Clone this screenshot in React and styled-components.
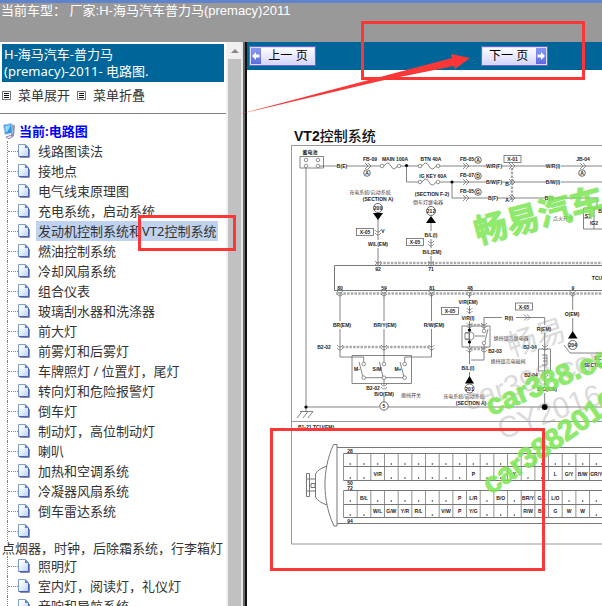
import React from 'react'
import styled, { createGlobalStyle, css } from 'styled-components'

const menuItems = [
  '线路图读法',
  '接地点',
  '电气线束原理图',
  '充电系统，启动系统',
  '发动机控制系统和VT2控制系统',
  '燃油控制系统',
  '冷却风扇系统',
  '组合仪表',
  '玻璃刮水器和洗涤器',
  '前大灯',
  '前雾灯和后雾灯',
  '车牌照灯 / 位置灯，尾灯',
  '转向灯和危险报警灯',
  '倒车灯',
  '制动灯，高位制动灯',
  '喇叭',
  '加热和空调系统',
  '冷凝器风扇系统',
  '倒车雷达系统',
  '点烟器，时钟，后除霜系统，行李箱灯',
  '照明灯',
  '室内灯，阅读灯，礼仪灯',
  '音响和导航系统',
]

const ACTIVE = 4
const LONG_LABEL = 16

const PageIcon = () => (
  <svg width='12' height='14' viewBox='0 0 12 14' aria-hidden='true'>
    <defs>
      <linearGradient id='sheet' x1='0' y1='0' x2='1' y2='1'>
        <stop offset='0.2' stopColor='#fff' />
        <stop offset='1' stopColor='#b4d2f4' />
      </linearGradient>
    </defs>
    <path d='M2 13.5H11.5V5' fill='none' stroke='#8c8fa8' />
    <path d='M.5 .5H7.5L10.5 3.5V12.5H.5Z' fill='url(#sheet)' stroke='#7e9cd6' />
    <path d='M10.5 4V12.5H1' fill='none' stroke='#4a5fae' />
    <path d='M7 .5V4H10.5Z' fill='#5b7fd0' />
  </svg>
)

const ComputerIcon = () => (
  <svg width='13' height='17' viewBox='0 0 13 17' aria-hidden='true'>
    <path d='M8 1L12 2.5L11 13L6 16L2 14L8 12Z' fill='#8f92b4' />
    <path d='M0.5 2L8.5 .5L9.5 10L2 11.5Z' fill='#2f97ea' stroke='#b9c6e4' />
    <path d='M2 3L7.5 2L5 8L2.8 9.5Z' fill='#8fdcff' />
    <path d='M3 14L7 12.5L10 13.5L6 15.8Z' fill='#dfe0ee' stroke='#7d7fa6' strokeWidth='.6' />
  </svg>
)

const ToggleIcon = () => (
  <svg width='9' height='9' viewBox='0 0 9 9' aria-hidden='true'>
    <rect x='.5' y='.5' width='8' height='8' fill='#fff' stroke='#777' />
    <path d='M2 2.5H7M2 4.5H7M2 6.5H7' stroke='#111' />
  </svg>
)

const ArrowIcon = ({ flip }) => (
  <svg width='8' height='8' viewBox='0 0 8 8' aria-hidden='true'>
    <path
      d='M0 4L4 0V2.5H7.5V5.5H4V8Z'
      fill='#fff'
      transform={flip ? 'matrix(-1 0 0 1 8 0)' : undefined}
    />
  </svg>
)

// text, x, y (centre of the text)
const wireLabels = [
  ['蓄电池', 310, 152], ['B(E)', 342, 166], ['FB-09', 370, 159], ['MAIN 100A', 395, 159],
  ['BTN 40A', 431, 159], ['IG KEY 60A', 433, 176], ['(SECTION F-2)', 432, 194],
  ['(SECTION A)', 378, 199], ['V', 383, 231], ['W/L(EM)', 378, 244], ['B/L(I)', 431, 235],
  ['B/L(EM)', 432, 252], ['FB-05', 467, 159], ['FB-07', 467, 175], ['FB-05', 467, 191],
  ['W/R(F)', 494, 166], ['B/W(F)', 494, 182], ['B(F)', 493, 198], ['B', 507, 184],
  ['A', 507, 200], ['W/R(I)', 553, 166], ['B/W(I)', 553, 182], ['B(I)', 549, 198],
  ['JB-04', 583, 159], ['ST', 588, 216], ['IG2', 594, 223], ['B', 600, 211],
  ['92', 378, 269], ['71', 431, 269], ['80', 340, 288], ['59', 384, 288], ['81', 432, 288],
  ['48', 470, 288], ['9', 573, 288], ['TCU', 597, 278], ['BR(EM)', 342, 325],
  ['BR/Y(EM)', 385, 325], ['R/W(EM)', 434, 325], ['B2-02', 324, 347], ['M-', 357, 369],
  ['S/M', 377, 369], ['M+', 398, 369], ['B2-02', 373, 388], ['B/O(EM)', 384, 394],
  ['B1-21 TCU(EM)', 316, 427], ['V/R(EM)', 468, 302], ['V/R(I)', 468, 318], ['R(I)', 509, 318],
  ['R(EM)', 544, 329], ['B2-03', 495, 351], ['B/L(I)', 468, 368], ['(SECTION A)', 471, 403],
  ['B2-04', 530, 347], ['B2-04', 531, 375], ['B/O(EM)', 547, 389], ['O(EM)', 572, 314],
  ['EC', 598, 358], ['(SECTION', 594, 365],
]

const cnLabels = [
  ['充电系统/启动系统', 370, 192], ['倒车灯继电器', 428, 202], ['点火开关', 563, 218],
  ['换挡开关', 411, 395], ['换挡锁芯继电器', 511, 338], ['换挡锁芯电磁阀', 508, 361],
  ['充电系统/启动系统', 464, 396],
]

// text, x, y, radius
const circleTags = [
  ['A', 367, 173, 3.3], ['A', 478, 160, 3.3], ['D', 478, 176, 3.3], ['G', 478, 192, 3.3],
  ['A', 582, 173, 3.3], ['200', 378, 208, 4.5], ['212', 431, 211, 4.5], ['5', 384, 406, 4.2],
  ['201', 469.5, 388.5, 4.5], ['204', 572.7, 345, 4.5],
]

const boxTags = [
  ['X-05', 365, 232], ['X-05', 415, 242], ['X-01', 512.5, 159], ['X-05', 450, 311], ['X-05', 524, 306.5],
]

const nodes = [
  [306, 160], [318, 160], [306, 166], [318, 166], [382, 166], [399, 166], [420, 166], [438, 166],
  [420, 182], [438, 182], [363.7, 364], [384, 364], [404.7, 364], [363.7, 377.7], [384, 377.7],
  [404.7, 377.7], [484, 331], [484, 343],
]

const dots = [[406.5, 165.5], [452, 182], [306, 407], [469.5, 330], [469.5, 342]]

const plugs = [[465, 166], [465, 182], [465, 198], [367, 166], [582, 166], [511, 166], [511, 182], [511, 198], [526, 317.5]]

const downPlugs = [
  [378, 232], [431, 243], [340, 293], [384, 293], [431.5, 293], [469.5, 293], [572.7, 293],
  [469.5, 349], [484, 349], [545, 374], [384, 386], [469.5, 310], [378, 263], [431, 263],
  [340, 347], [384, 347], [431.5, 347], [545, 347], [469.5, 325], [484, 325],
]

// connector B1-21: four rows of pins, column -> wire colour
const COLS = 19
const COL_W = 13.67
const pinRows = [
  { mid: 460, dot: 464, cells: {} },
  { mid: 474, dot: 478, cells: { 2: 'V/R', 9: 'P', 12: 'Y', 15: 'L', 16: 'G/Y', 17: 'B/W', 18: 'GR/Y' } },
  { mid: 498, dot: 501, cells: { 1: 'B/L', 8: 'P', 9: 'L/R', 11: 'B/O', 13: 'BR/Y', 14: 'G/L', 15: 'L/O' } },
  { mid: 511, dot: 515, cells: { 2: 'W/L', 3: 'G/W', 4: 'Y/R', 5: 'R/L', 7: 'V/W', 8: 'P', 9: 'Y/G', 13: 'R/W', 14: 'BR', 15: 'G', 16: 'W', 17: 'W' } },
]

const Connector = () => (
  <g>
    <g fill='none' stroke='#777'>
      <path d='M333.5 444.5H337V526H334C322 500 322 470 333.5 444.5Z' />
      <path d='M327 466Q318 469 315.5 474V497Q318 502 327 505' />
      <path d='M306.5 473.5H309.5V496.5H306.5ZM306.5 479H315M306.5 491H315M311 483.5H315V487.5H311Z' />
      <path d='M337 447.5H602M337 523.5H602' />
      <path d='M343.5 453.5H602M343.5 466.5H602M343.5 480.5H602M343.5 490.5H602M343.5 504.5H602M343.5 517.5H602' />
    </g>
    {Array.from({ length: COLS }, (_, i) => (
      <path
        key={i}
        d={`M${343.5 + i * COL_W} 453.5V480.5M${343.5 + i * COL_W} 490.5V517.5`}
        stroke='#777'
        strokeWidth='.8'
      />
    ))}
    {pinRows.map((row) =>
      Array.from({ length: COLS }, (_, i) => {
        const x = 350.3 + i * COL_W
        return row.cells[i] ? (
          <WireText key={`${row.mid}-${i}`} x={x} y={row.mid + 2}>{row.cells[i]}</WireText>
        ) : (
          <circle key={`${row.mid}-${i}`} cx={x} cy={row.dot} r='.8' fill='#333' />
        )
      })
    )}
    <WireText x='350' y='453'>28</WireText>
    <WireText x='350' y='485'>50</WireText>
    <WireText x='350' y='490'>72</WireText>
    <WireText x='350' y='523'>94</WireText>
  </g>
)

const WiringDiagram = () => (
  <Drawing viewBox='290 145 312 400' width='312' height='400' role='img' aria-label='VT2控制系统'>
    <g fill='none' stroke='#999'>
      <path d='M602 145.5H291.5V544M602 544H291.5M291.5 421.5H602' />
    </g>
    <g fill='none' stroke='#666' strokeWidth='.8'>
      <path d='M300 156.5H323.5V168H300Z' />
      <path d='M306 168V412M300 411.5H313M302 411.5L297 418M308 411.5L303 418M313 411.5L308 418' />
      <path d='M320 166H337M347 166H380M401 166H418M440 166H486M502 166H546M561 166H602' />
      <path d='M406.5 166V182H418M440 182H486M502 182H546M561 182H602M452 182V198H488M497 198H545M553 198H597V208' />
      <path d='M602 208H583.5V229H602M594 208V229M583.5 218H592' />
      <path d='M378 219V240M378 248V265M431 222V231M431 239V248M431 256V265' />
      <path d='M602 265.5H334.5V290.5H602' stroke='#555' />
      <path d='M340 293V321M340 329V357H363.7V362M384 293V321M384 329V362M384 378V385M384 397V402M431.5 293V321M431.5 329V357H404.7V362' />
      <path d='M352 355.5H411.5V383.5H352ZM363.7 377.7H404.7M359 362L363 377M379.5 362L383 377M400 362L404 377' />
      <path d='M306 407H379M388 407H602' />
      <path d='M469.5 293V298M469.5 306V314M469.5 321V347M469.5 349V364M469.5 372V377' />
      <path d='M484 345V360H471M484 329V317.5H502M516 317.5H544.7V325M544.7 333V385M544.7 393V407' />
      <path d='M462 326H490V347H462ZM465 333H469V339H465ZM465 333Q474 330 474 336Q474 342 465 339M488 329L485 341M475 336H485' />
      <path d='M538.5 349H550.5V371H538.5ZM542 355H547V365H542M547 358H543M547 361H543' />
      <path d='M572.7 293V310M572.7 318V332M564 345L570 353H602' />
      <path d='M384 166Q388 160 391 166T397 166M422 166Q426 160 429 166T436 166M422 182Q426 176 429 182T436 182' />
    </g>
    <g fill='none' stroke='#aaa' strokeWidth='2.5' strokeDasharray='2.5 1.2'>
      <path d='M376 263H602M336 293.5H602M342 347H430M512 168V202M470 325H484M470 349H484' />
    </g>
    <g fill='none' stroke='#666' strokeWidth='.7'>
      {plugs.map(([x, y]) => (
        <path key={`${x}-${y}`} d={`M${x - 2} ${y - 3}L${x + 1} ${y}L${x - 2} ${y + 3}M${x + 1} ${y - 3}L${x + 4} ${y}L${x + 1} ${y + 3}`} />
      ))}
      {downPlugs.map(([x, y]) => (
        <path key={`${x}-${y}`} d={`M${x - 3} ${y - 2}Q${x} ${y + 2} ${x + 3} ${y - 2}M${x - 3} ${y + 1}Q${x} ${y + 5} ${x + 3} ${y + 1}`} />
      ))}
      {nodes.map(([x, y]) => (
        <circle key={`${x}-${y}`} cx={x} cy={y} r='1.8' fill='#fff' />
      ))}
    </g>
    {dots.map(([x, y]) => (
      <circle key={`${x}-${y}`} cx={x} cy={y} r='1.6' />
    ))}
    <circle cx='544.7' cy='407' r='3' />
    <path d='M373 213H383L378 220ZM426 223H436L431 216ZM465 383.5H474L469.5 376ZM568 338.5H577.5L572.7 331Z' />
    {boxTags.map(([text, x, y]) => (
      <g key={`${x}-${y}`}>
        <rect x={x - 8.5} y={y - 3.5} width='17' height='7' fill='#fff' stroke='#666' strokeWidth='.8' />
        <WireText x={x} y={y + 2}>{text}</WireText>
      </g>
    ))}
    {circleTags.map(([text, x, y, r]) => (
      <g key={`${x}-${y}`}>
        <circle cx={x} cy={y} r={r} fill='#fff' stroke='#444' strokeWidth='.8' />
        <WireText x={x} y={y + 2}>{text}</WireText>
      </g>
    ))}
    {wireLabels.map(([text, x, y]) => (
      <WireText key={`${text}-${x}-${y}`} x={x} y={y + 2}>{text}</WireText>
    ))}
    {cnLabels.map(([text, x, y]) => (
      <WireText key={`${x}-${y}`} x={x} y={y + 2} $cn>{text}</WireText>
    ))}
    <Connector />
    <Watermark transform='translate(511 357) rotate(-18)'>畅易</Watermark>
    <Watermark transform='translate(468 411) rotate(-18)'>car398.com</Watermark>
    <Watermark transform='translate(502 440) rotate(-20)'>CY2016</Watermark>
    <Watermark $green $size={33} transform='translate(478 244) rotate(-15)'>畅易汽车</Watermark>
    <Watermark $green $size={29} transform='translate(491 416) rotate(-23)'>car388.com</Watermark>
    <Watermark $green $size={29} transform='translate(491 495) rotate(-35)'>car3882016</Watermark>
  </Drawing>
)

const Annotations = () => (
  <Overlay width='602' height='606' viewBox='0 0 602 606' aria-hidden='true'>
    <g fill='none' stroke='#fb3737' strokeWidth='3'>
      <rect x='362.5' y='22.5' width='221' height='56' />
      <rect x='139.5' y='216.5' width='95' height='33' />
      <rect x='271.5' y='429.5' width='272' height='140' />
    </g>
    <path d='M236 115L452 58L451 54L470 58L455 69L454 66L380 81Z' fill='#fb3737' />
  </Overlay>
)

const App = () => {
  return (
    <Page>
      <GlobalStyle />
      <TopBar>当前车型： 厂家:H-海马汽车普力马(premacy)2011</TopBar>
      <Sidebar>
        <Menu>
          <CarTitle>H-海马汽车-普力马<br />(premacy)-2011- 电路图.</CarTitle>
          <Toggles>
            <ToggleButton><ToggleIcon />菜单展开</ToggleButton>
            <ToggleButton><ToggleIcon />菜单折叠</ToggleButton>
          </Toggles>
          <Root><ComputerIcon />当前:电路图</Root>
          <Tree>
            {menuItems.map((item, i) => (
              <TreeItem key={item}>
                <TreeLink href='#' $long={item.length > LONG_LABEL}>
                  <Branch />
                  <PageIcon />
                  <Label $active={i === ACTIVE} $long={item.length > LONG_LABEL}>{item}</Label>
                </TreeLink>
              </TreeItem>
            ))}
          </Tree>
        </Menu>
        <ScrollBar>
          <ScrollArrow />
          <ScrollThumb />
        </ScrollBar>
        <Divider />
      </Sidebar>
      <Main>
        <PageNav>
          <NavButton><NavArrow><ArrowIcon /></NavArrow><span>上一 页</span></NavButton>
          <NavButton><span>下一 页</span><NavArrow><ArrowIcon flip /></NavArrow></NavButton>
        </PageNav>
        <Sheet>
          <SheetTitle><strong>VT2</strong>控制系统</SheetTitle>
          <WiringDiagram />
        </Sheet>
      </Main>
      <Annotations />
    </Page>
  )
}

const GlobalStyle = createGlobalStyle`
  * {
    box-sizing: border-box;
  }
  body {
    margin: 0;
    background: #fff;
    color: #333;
    font: 13px/20px "Noto Sans", "Noto Sans CJK SC", sans-serif;
  }
`

const Page = styled.div`
  position: relative;
  display: grid;
  grid-template: auto minmax(0, 1fr) / 247px minmax(0, 1fr);
  height: 100vh;
  overflow: hidden;
`

const TopBar = styled.header`
  grid-column: 1 / -1;
  height: 42px;
  padding-left: 1px;
  border-top: 3px solid #5f83cc;
  background: #999;
  color: #fff;
  font-family: "Liberation Sans", "Noto Sans CJK SC", sans-serif;
  line-height: 16px;
  white-space: nowrap;
`

const Sidebar = styled.aside`
  display: flex;
  overflow: hidden;
`

const Menu = styled.nav`
  flex: 1;
  min-width: 0;
  background: #fff;
`

const CarTitle = styled.div`
  margin: 2px 2px 0;
  padding: 2px;
  background: #069;
  color: #fff;
  line-height: 17px;
`

const Toggles = styled.div`
  display: flex;
  gap: 7px;
  padding: 3px 2px 8px;
  border-bottom: 1px solid #808080;
`

const ToggleButton = styled.button`
  display: flex;
  align-items: center;
  gap: 7px;
  padding: 0;
  border: 0;
  background: none;
  color: inherit;
  font: inherit;
`

const Root = styled.div`
  display: flex;
  align-items: center;
  gap: 3px;
  height: 20px;
  margin: 7px 0 0 3px;
  color: #00f;
  font-weight: 700;
`

const Tree = styled.ul`
  margin: 0;
  padding: 0;
  list-style: none;
`

const TreeItem = styled.li`
  white-space: nowrap;
`

const TreeLink = styled.a`
  display: flex;
  flex-wrap: ${(props) => (props.$long ? 'wrap' : 'nowrap')};
  align-items: center;
  color: inherit;
  text-decoration: none;
`

const Branch = styled.span`
  width: 11px;
  height: 20px;
  margin-left: 7px;
  border-left: 1px dotted #808080;
  &::after {
    content: '';
    display: block;
    margin-top: 10px;
    border-top: 1px dotted #808080;
  }
`

const Label = styled.span`
  margin-left: 6px;
  padding: 0 2px;
  background: ${(props) => (props.$active ? '#c1d2ee' : 'none')};
  ${(props) => props.$long && css`
    flex-basis: 100%;
    margin-left: 0;
    line-height: 15px;
  `}
`

const ScrollBar = styled.div`
  display: flex;
  flex-direction: column;
  width: 15px;
  padding-left: 2px;
  background: #f0f0f0;
`

const ScrollArrow = styled.div`
  margin: 7px auto 6px;
  border: 4px solid transparent;
  border-top: 0;
  border-bottom-color: #888;
`

const ScrollThumb = styled.div`
  flex: 1;
  background: #c1c1c1;
`

const Divider = styled.div`
  width: 6px;
  background: linear-gradient(90deg, #e8e8e8 0 2px, #666 2px 4px, #111 4px);
`

const Main = styled.main`
  overflow: hidden;
`

const PageNav = styled.nav`
  display: grid;
  grid-template-columns: 66% 1fr;
  align-items: center;
  height: 28px;
  padding: 0 2px;
  background: #069;
`

const NavButton = styled.button`
  display: flex;
  justify-self: start;
  width: 67px;
  height: 20px;
  padding: 0;
  border: 1px solid #6a66c8;
  outline: 1px solid #dcdcfa;
  outline-offset: -2px;
  background: linear-gradient(#fff, #d4d4fb);
  color: #000;
  font: 12px/18px "Liberation Sans", "Noto Sans CJK SC", sans-serif;
  span {
    flex: 1;
    white-space: nowrap;
  }
`

const NavArrow = styled.i`
  display: grid;
  place-items: center;
  width: 11px;
  background: linear-gradient(#8c9cf0, #5a68d8);
`

const Sheet = styled.section`
  padding: 58px 0 0 43px;
`

const SheetTitle = styled.h1`
  margin: 0 0 0 4px;
  color: #111;
  font: 500 14px/17px "Liberation Sans", "Noto Sans CJK SC", sans-serif;
`

const Drawing = styled.svg`
  display: block;
`

const WireText = styled.text`
  fill: ${(props) => (props.$cn ? '#444' : '#222')};
  font: ${(props) => (props.$cn ? 400 : 700)} 5px "Liberation Sans", "Noto Sans CJK SC", sans-serif;
  text-anchor: middle;
`

const Watermark = styled.text`
  fill: ${(props) => (props.$green ? '#7be654' : '#999')};
  stroke: ${(props) => (props.$green ? '#7be654' : 'none')};
  opacity: ${(props) => (props.$green ? 0.85 : 0.35)};
  font: ${(props) => (props.$green ? 700 : 400)} ${(props) => props.$size || 30}px "Liberation Sans", "Noto Sans CJK SC", sans-serif;
`

const Overlay = styled.svg`
  position: absolute;
  top: 0;
  left: 0;
  pointer-events: none;
`

export default App
